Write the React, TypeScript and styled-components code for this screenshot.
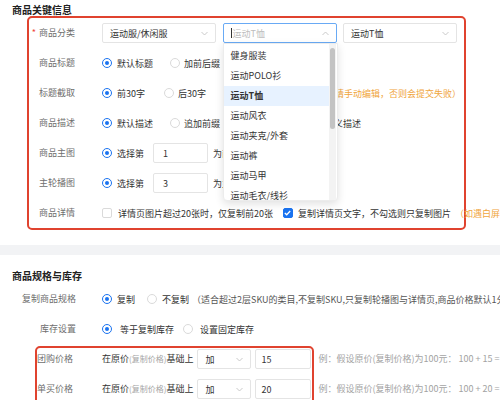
import React from 'react';
import styled, { createGlobalStyle, css } from 'styled-components';

const Global = createGlobalStyle`
  html, body { margin: 0; padding: 0; background: #fff; overflow: hidden; }
  body {
    font-family: "Noto Sans CJK SC", "Noto Sans", sans-serif;
    font-size: 9px;
    color: #333;
  }
  * { box-sizing: border-box; }
`;

const Page = styled.div`
  width: 500px;
  height: 400px;
  overflow: hidden;
  white-space: nowrap;
`;

const SectionTitle = styled.div<{ $mt: number; $h: number; $lh: number }>`
  margin-top: ${(p) => p.$mt}px;
  height: ${(p) => p.$h}px;
  line-height: ${(p) => p.$lh}px;
  padding-left: 12px;
  font-size: 10px;
  font-weight: 700;
  color: #222;
`;

const KeyBox = styled.div`
  margin-top: 1px;
  margin-left: 27px;
  width: 439px;
  border: 2px solid #e0432f;
  border-radius: 5px;
`;

const Row = styled.div<{ $top?: boolean }>`
  display: flex;
  align-items: ${(p) => (p.$top ? 'flex-start' : 'center')};
  height: 30px;
  padding-top: ${(p) => (p.$top ? 1 : 0)}px;
`;

const Label = styled.div<{ $w: number; $mr: number; $left?: boolean }>`
  flex-shrink: 0;
  width: ${(p) => p.$w}px;
  margin-right: ${(p) => p.$mr}px;
  text-align: ${(p) => (p.$left ? 'left' : 'right')};
  color: #6e6e6e;
  line-height: 20px;
`;

const Star = styled.span`
  color: #f0473a;
  margin-right: 3px;
`;

const Opt = styled.span<{ $gap: number; $mr: number }>`
  display: inline-flex;
  align-items: center;
  gap: ${(p) => p.$gap}px;
  margin-right: ${(p) => p.$mr}px;
  color: #333;
`;

const Radio = styled.span<{ $on?: boolean }>`
  position: relative;
  flex-shrink: 0;
  width: 10px;
  height: 10px;
  border-radius: 50%;
  background: #fff;
  border: 1px solid ${(p) => (p.$on ? '#1a73f0' : '#dadada')};
  ${(p) =>
    p.$on &&
    css`
      &::after {
        content: '';
        position: absolute;
        left: 2px;
        top: 2px;
        width: 4px;
        height: 4px;
        border-radius: 50%;
        background: #1a73f0;
      }
    `}
`;

const Check = styled.span<{ $on?: boolean }>`
  flex-shrink: 0;
  width: 10px;
  height: 10px;
  border-radius: 2px;
  border: 1px solid ${(p) => (p.$on ? '#1a73f0' : '#dadada')};
  background: ${(p) => (p.$on ? '#1a73f0' : '#fff')};
  display: inline-flex;
  align-items: center;
  justify-content: center;
`;

const Hint = styled.span<{ $ml: number; $color?: string }>`
  margin-left: ${(p) => p.$ml}px;
  color: ${(p) => p.$color ?? '#f0a53c'};
`;

const SelectBox = styled.div<{ $w: number; $focus?: boolean; $ml?: number }>`
  position: relative;
  flex-shrink: 0;
  width: ${(p) => p.$w}px;
  height: 20px;
  margin-left: ${(p) => p.$ml ?? 0}px;
  border: 1px solid ${(p) => (p.$focus ? '#69aaf5' : '#e4e4e4')};
  border-radius: 2px;
  background: #fff;
  display: flex;
  align-items: center;
  justify-content: space-between;
  padding: 0 7px 0 7px;
  color: #333;
`;

const Placeholder = styled.span`
  display: inline-flex;
  align-items: center;
  color: #bdbdbd;
  &::before {
    content: '';
    width: 1px;
    height: 10px;
    background: #333;
    margin-right: 1px;
  }
`;

const Dropdown = styled.div`
  position: absolute;
  left: -1px;
  top: 19px;
  width: 115px;
  height: 158px;
  background: #fff;
  border: 1px solid #ececec;
  border-radius: 0 0 4px 4px;
  box-shadow: 0 3px 8px rgba(0, 0, 0, 0.12);
  overflow: hidden;
  z-index: 10;
`;

const List = styled.div`
  margin-right: 8px;
  padding-top: 2px;
`;

const Item = styled.div<{ $on?: boolean }>`
  height: 20px;
  line-height: 20px;
  padding-left: 7px;
  color: #333;
  background: ${(p) => (p.$on ? '#e7f2ff' : 'transparent')};
  font-weight: ${(p) => (p.$on ? 600 : 400)};
`;

const Track = styled.div`
  position: absolute;
  right: 1px;
  top: 0;
  bottom: 0;
  width: 7px;
  background: #f3f3f3;
`;

const Thumb = styled.div`
  position: absolute;
  left: 1px;
  top: 4px;
  width: 5px;
  height: 81px;
  border-radius: 3px;
  background: #c3c3c3;
`;

const InputBox = styled.div<{ $w: number; $pl: number; $ml: number }>`
  flex-shrink: 0;
  width: ${(p) => p.$w}px;
  height: 20px;
  margin-left: ${(p) => p.$ml}px;
  padding-left: ${(p) => p.$pl}px;
  border: 1px solid #e4e4e4;
  border-radius: 2px;
  background: #fff;
  display: flex;
  align-items: center;
  color: #333;
`;

const Plain = styled.span<{ $ml?: number }>`
  margin-left: ${(p) => p.$ml ?? 0}px;
  color: #333;
`;

const Band = styled.div`
  margin-top: 15px;
  height: 10px;
  background: #f2f3f5;
`;

const Section2 = styled.div``;

const PriceWrap = styled.div`
  display: flex;
  align-items: flex-start;
  margin-top: 2px;
`;

const PriceBox = styled.div`
  margin-left: 35px;
  border: 2px solid #e0432f;
  border-radius: 5px;
  padding-right: 1px;
`;

const PriceText = styled.span`
  line-height: 20px;
  color: #333;
`;

const Muted = styled.span`
  font-size: 8px;
  color: #a5a5a5;
`;

const Examples = styled.div`
  padding-top: 2px;
  margin-left: 4px;
`;

const ExampleRow = styled.div`
  height: 30px;
  padding-top: 1px;
  line-height: 20px;
  color: #a3a3a3;
`;

const Chevron = ({ up }: { up?: boolean }) => (
  <svg width="7" height="5" viewBox="0 0 7 5" style={{ flexShrink: 0 }}>
    <polyline
      points={up ? '0.5,4 3.5,1 6.5,4' : '0.5,1 3.5,4 6.5,1'}
      fill="none"
      stroke="#c4c4c4"
      strokeWidth="0.9"
    />
  </svg>
);

const Tick = () => (
  <svg width="7" height="6" viewBox="0 0 7 6">
    <polyline points="0.8,3 2.7,4.8 6.2,1" fill="none" stroke="#fff" strokeWidth="1.3" />
  </svg>
);

const categories = [
  '健身服装',
  '运动POLO衫',
  '运动T恤',
  '运动风衣',
  '运动夹克/外套',
  '运动裤',
  '运动马甲',
  '运动毛衣/线衫',
  '运动卫衣',
];

const KLabel = ({ children, star }: { children: React.ReactNode; star?: boolean }) => (
  <Label $w={46} $mr={27}>
    {star && <Star>*</Star>}
    {children}
  </Label>
);

export default function App() {
  return (
    <Page>
      <Global />
      <SectionTitle $mt={0} $h={15} $lh={19}>
        商品关键信息
      </SectionTitle>
      <KeyBox>
        <Row>
          <KLabel star>商品分类</KLabel>
          <SelectBox $w={114}>
            <span>运动服/休闲服</span>
            <Chevron />
          </SelectBox>
          <SelectBox $w={114} $ml={6.5} $focus>
            <Placeholder>运动T恤</Placeholder>
            <Chevron up />
            <Dropdown>
              <List>
                {categories.map((c) => (
                  <Item key={c} $on={c === '运动T恤'}>
                    {c}
                  </Item>
                ))}
              </List>
              <Track>
                <Thumb />
              </Track>
            </Dropdown>
          </SelectBox>
          <SelectBox $w={114} $ml={6.5}>
            <span>运动T恤</span>
            <Chevron />
          </SelectBox>
        </Row>
        <Row>
          <KLabel>商品标题</KLabel>
          <Opt $gap={5} $mr={17}>
            <Radio $on />
            默认标题
          </Opt>
          <Opt $gap={4} $mr={0}>
            <Radio />
            加前后缀
          </Opt>
        </Row>
        <Row>
          <KLabel>标题截取</KLabel>
          <Opt $gap={5} $mr={19}>
            <Radio $on />
            前30字
          </Opt>
          <Opt $gap={4} $mr={0}>
            <Radio />
            后30字
          </Opt>
          <Hint $ml={12}>（超出平台标题字数限制时，请手动编辑，否则会提交失败）</Hint>
        </Row>
        <Row>
          <KLabel>商品描述</KLabel>
          <Opt $gap={5} $mr={17}>
            <Radio $on />
            默认描述
          </Opt>
          <Opt $gap={4} $mr={16}>
            <Radio />
            追加前缀
          </Opt>
          <Opt $gap={4} $mr={16}>
            <Radio />
            追加后缀
          </Opt>
          <Opt $gap={4} $mr={0}>
            <Radio />
            自定义描述
          </Opt>
        </Row>
        <Row>
          <KLabel>商品主图</KLabel>
          <Opt $gap={5} $mr={0}>
            <Radio $on />
            选择第
          </Opt>
          <InputBox $w={55} $pl={9} $ml={9}>
            1
          </InputBox>
          <Plain $ml={5}>为商品主图</Plain>
        </Row>
        <Row>
          <KLabel>主轮播图</KLabel>
          <Opt $gap={5} $mr={0}>
            <Radio $on />
            选择第
          </Opt>
          <InputBox $w={55} $pl={9} $ml={9}>
            3
          </InputBox>
          <Plain $ml={5}>为主轮播图</Plain>
        </Row>
        <Row>
          <KLabel>商品详情</KLabel>
          <Opt $gap={6} $mr={10}>
            <Check />
            详情页图片超过20张时，仅复制前20张
          </Opt>
          <Opt $gap={5} $mr={0}>
            <Check $on>
              <Tick />
            </Check>
            复制详情页文字，不勾选则只复制图片
          </Opt>
          <Hint $ml={4}>（如遇白屏请取消勾选）</Hint>
        </Row>
      </KeyBox>

      <Band />

      <Section2>
        <SectionTitle $mt={13} $h={16} $lh={16}>
          商品规格与库存
        </SectionTitle>
        <Row>
          <Label $w={76} $mr={26}>
            复制商品规格
          </Label>
          <Opt $gap={5} $mr={12}>
            <Radio $on />
            复制
          </Opt>
          <Opt $gap={5} $mr={0}>
            <Radio />
            不复制
          </Opt>
          <Hint $ml={3} $color="#555">
            （适合超过2层SKU的类目,不复制SKU,只复制轮播图与详情页,商品价格默认1分)
          </Hint>
        </Row>
        <Row>
          <Label $w={76} $mr={26}>
            库存设置
          </Label>
          <Opt $gap={8} $mr={9}>
            <Radio $on />
            等于复制库存
          </Opt>
          <Opt $gap={7} $mr={0}>
            <Radio />
            设置固定库存
          </Opt>
        </Row>
        <PriceWrap>
          <PriceBox>
            <Row $top>
              <Label $w={37} $mr={28} $left>
                团购价格
              </Label>
              <PriceText>
                在原价<Muted>(复制价格)</Muted>基础上
              </PriceText>
              <SelectBox $w={54} $ml={4}>
                <span>加</span>
                <Chevron />
              </SelectBox>
              <InputBox $w={56} $pl={5} $ml={4}>
                15
              </InputBox>
            </Row>
            <Row $top>
              <Label $w={37} $mr={28} $left>
                单买价格
              </Label>
              <PriceText>
                在原价<Muted>(复制价格)</Muted>基础上
              </PriceText>
              <SelectBox $w={54} $ml={4}>
                <span>加</span>
                <Chevron />
              </SelectBox>
              <InputBox $w={56} $pl={5} $ml={4}>
                20
              </InputBox>
            </Row>
          </PriceBox>
          <Examples>
            <ExampleRow>例：假设原价(复制价格)为100元：  100 + 15 = 115元</ExampleRow>
            <ExampleRow>例：假设原价(复制价格)为100元：  100 + 20 = 120元</ExampleRow>
          </Examples>
        </PriceWrap>
      </Section2>
    </Page>
  );
}
